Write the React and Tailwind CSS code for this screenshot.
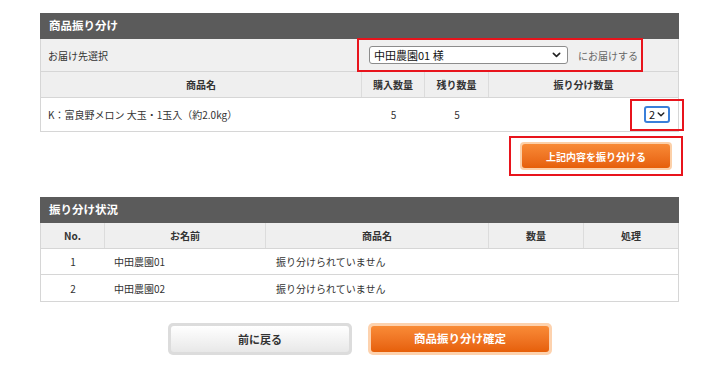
import React from 'react';

const font = { fontFamily: '"Noto Sans CJK JP", "Noto Sans", sans-serif' };

function Chevron({ className = '' }) {
  return (
    <svg viewBox="0 0 10 6" className={className} fill="none" stroke="currentColor" strokeWidth="1.8" strokeLinecap="round" strokeLinejoin="round">
      <path d="M1.5 1.2 5 4.6 8.5 1.2" />
    </svg>
  );
}

function SectionTitle({ children }) {
  return (
    <div className="h-[26px] bg-[#5b5b5b] flex items-center pl-[9px] text-white text-[11.5px] font-bold">
      {children}
    </div>
  );
}

const statusRows = [
  { no: 1, name: '中田農園01', item: '振り分けられていません' },
  { no: 2, name: '中田農園02', item: '振り分けられていません' },
];

export default function App() {
  return (
    <div className="w-[720px] h-[372px] bg-white pt-[13px] pl-[40px] text-[#333]" style={font}>
      <div className="w-[639px]">
        {/* Section: 商品振り分け */}
        <SectionTitle>商品振り分け</SectionTitle>
        <div className="border-x border-b border-[#d6d6d6]">
          <div className="h-[33px] bg-[#f0f0f0] border-b border-[#d6d6d6] flex items-center">
            <span className="pl-[7px] w-[316px] text-[10px]">お届け先選択</span>
            <div className="h-[34px] -my-px w-[286px] border-2 border-[#e8141c] flex items-center pl-[10px]">
              <div className="w-[199px] h-[18px] bg-white border border-[#8c8c8c] rounded-[3px] flex items-center justify-between pl-[4px] pr-[6px]">
                <span className="text-[11px] text-[#111]">中田農園01 様</span>
                <Chevron className="w-[9px] h-[6px] text-[#222]" />
              </div>
              <span className="ml-[10px] text-[10px] text-[#666]">にお届けする</span>
            </div>
          </div>
          <div className="grid grid-cols-[321px_63px_64px_1fr] h-[26px] bg-[#efefef] border-b border-[#d6d6d6] text-[10px] font-bold">
            <div className="flex items-center justify-center border-r border-[#dcdcdc]">商品名</div>
            <div className="flex items-center justify-center border-r border-[#dcdcdc]">購入数量</div>
            <div className="flex items-center justify-center border-r border-[#dcdcdc]">残り数量</div>
            <div className="flex items-center justify-center">振り分け数量</div>
          </div>
          <div className="grid grid-cols-[321px_63px_64px_1fr] h-[33px] text-[10px]">
            <div className="flex items-center pl-[7px]">K：富良野メロン 大玉・1玉入（約2.0kg）</div>
            <div className="flex items-center justify-center">5</div>
            <div className="flex items-center justify-center">5</div>
            <div className="flex items-center justify-end">
              <div className="w-[54px] h-[32px] -mr-[6px] border-2 border-[#e8141c] flex items-center justify-center">
                <div className="w-[26px] h-[17px] border-2 border-[#3a7fd9] rounded-[3px] bg-white flex items-center justify-between pl-[3px] pr-[3px]">
                  <span className="text-[11px] text-[#111] leading-none">2</span>
                  <Chevron className="w-[8px] h-[5px] text-[#222]" />
                </div>
              </div>
            </div>
          </div>
        </div>

        <div className="flex justify-end mt-[4px] -mr-[4px]">
          <div className="w-[174px] h-[40px] border-2 border-[#e8141c] flex items-center justify-center">
            <button className="w-[152px] h-[28px] rounded-[4px] p-[2px] bg-[#fcd0a8]">
              <span className="w-full h-full rounded-[3px] bg-gradient-to-b from-[#f88a35] to-[#e65f08] flex items-center justify-center text-white text-[10px] font-bold">
                上記内容を振り分ける
              </span>
            </button>
          </div>
        </div>

        {/* Section: 振り分け状況 */}
        <div className="mt-[21px]">
          <SectionTitle>振り分け状況</SectionTitle>
          <div className="border-x border-b border-[#d6d6d6]">
            <div className="grid grid-cols-[64px_161px_223px_95px_1fr] h-[26px] bg-[#efefef] border-b border-[#d6d6d6] text-[10px] font-bold">
              <div className="flex items-center justify-center border-r border-[#dcdcdc]">No.</div>
              <div className="flex items-center justify-center border-r border-[#dcdcdc]">お名前</div>
              <div className="flex items-center justify-center border-r border-[#dcdcdc]">商品名</div>
              <div className="flex items-center justify-center border-r border-[#dcdcdc]">数量</div>
              <div className="flex items-center justify-center">処理</div>
            </div>
            {statusRows.map((r, i) => (
              <div
                key={r.no}
                className={`grid grid-cols-[64px_161px_223px_95px_1fr] h-[26px] text-[10px] ${i === 0 ? 'border-b border-[#d6d6d6]' : ''}`}
              >
                <div className="flex items-center justify-center">{r.no}</div>
                <div className="flex items-center pl-[9px]">{r.name}</div>
                <div className="flex items-center pl-[10px]">{r.item}</div>
                <div />
                <div />
              </div>
            ))}
          </div>
        </div>

        {/* Footer buttons */}
        <div className="flex gap-[16px] mt-[21px] ml-[128px]">
          <button className="w-[184px] h-[32px] rounded-[5px] p-[3px] bg-[#dcdcdc]">
            <span className="w-full h-full rounded-[3px] bg-gradient-to-b from-white to-[#e8e8e8] flex items-center justify-center text-[#333] text-[11px] font-bold">
              前に戻る
            </span>
          </button>
          <button className="w-[184px] h-[32px] rounded-[5px] p-[3px] bg-[#fdd2ae]">
            <span className="w-full h-full rounded-[3px] bg-gradient-to-b from-[#f98b36] to-[#e65f08] flex items-center justify-center text-white text-[11.5px] font-bold">
              商品振り分け確定
            </span>
          </button>
        </div>
      </div>
    </div>
  );
}
